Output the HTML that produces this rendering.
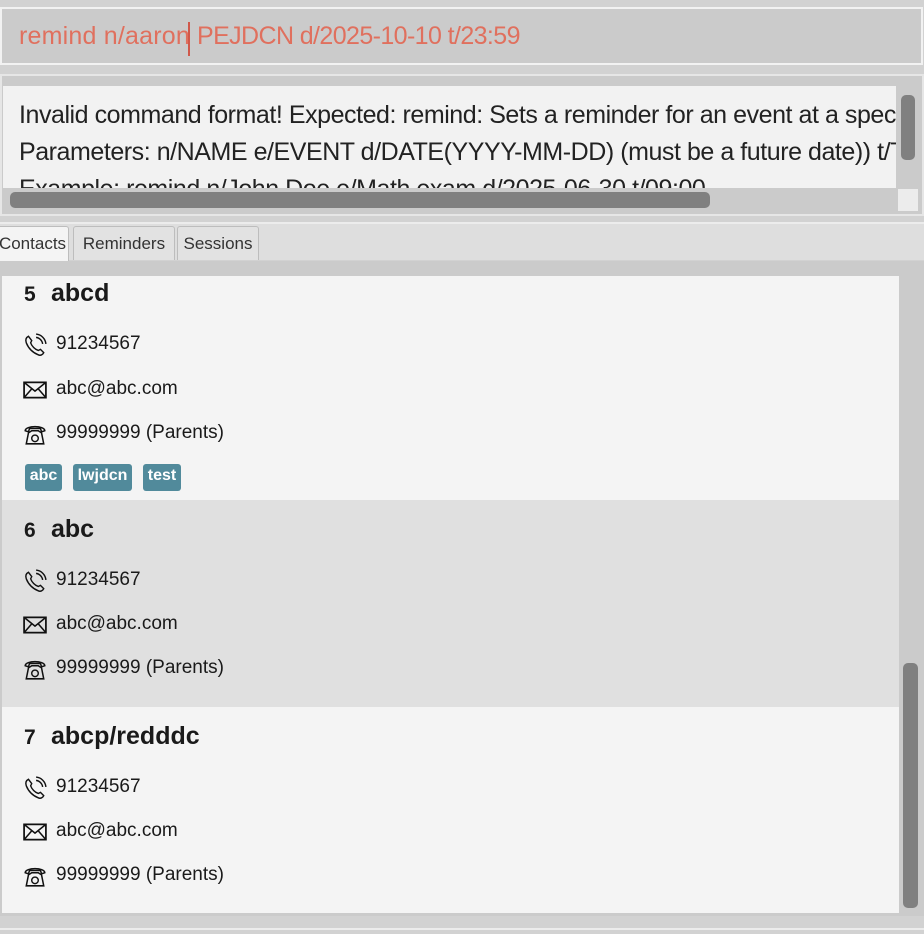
<!DOCTYPE html>
<html><head><meta charset="utf-8"><style>
*{margin:0;padding:0;box-sizing:border-box}
body{width:924px;height:934px;background:#d2d2d2;font-family:"Segoe UI","Liberation Sans",sans-serif;position:relative;overflow:hidden}
.abs{position:absolute}
.cmd{left:0;top:7px;width:923px;height:58px;background:#cbcbcb;border:2px solid #f2f2f2}
.cmd span{position:absolute;top:13px;font-size:25px;color:#e0705e;white-space:nowrap}
.caret{position:absolute;left:188px;top:22px;width:2px;height:34px;background:#d0584a}
.res{left:0;top:74px;width:924px;height:142px;background:#cbcbcb;border:2px solid #e6e6e6}
.resin{left:3px;top:86px;width:893px;height:102px;background:#f2f2f2;overflow:hidden}
.resin div{position:absolute;left:16px;font-size:25px;color:#222;white-space:nowrap;letter-spacing:-0.45px}
.hbar{left:10px;top:192px;width:700px;height:16px;background:#808080;border-radius:5px}
.vbar{left:901px;top:95px;width:14px;height:65px;background:#808080;border-radius:5px}
.corner{left:898px;top:189px;width:20px;height:22px;background:#ececec}
.tabbar{left:0;top:222px;width:924px;height:38px;background:#dedede;border-top:2px solid #ececec}
.tab{position:absolute;top:226px;height:34px;border:1px solid #bdbdbd;border-bottom:none;background:#e2e2e2;font-size:17px;color:#333;padding-top:7px;text-align:center;border-radius:3px 3px 0 0}
.list{left:0;top:261px;width:924px;height:655px;background:#cbcbcb}
.card{position:absolute;left:2px;width:897px}
.t{position:absolute;left:24px;font-size:25px;font-weight:bold;color:#1a1a1a}
.t b{display:inline-block;width:27px;font-size:21px}
.r{position:absolute;left:22px;font-size:19px;color:#1a1a1a;white-space:nowrap}
.r svg{position:absolute;left:1px;top:0px}
.r span{margin-left:34px}
.tag{position:absolute;top:464px;height:27px;background:#518a9b;color:#fff;font-weight:bold;font-size:16px;padding:3px 0 0;text-align:center;border-radius:3px}
.sbar{left:903px;top:663px;width:15px;height:245px;background:#808080;border-radius:5px}
</style></head><body>
<div class="abs cmd"><span style="left:17px;letter-spacing:0.2px">remind n/aaron</span><span style="left:195px;letter-spacing:-0.6px">PEJDCN d/2025-10-10 t/23:59</span></div>
<div class="abs caret"></div>
<div class="abs res"></div>
<div class="abs resin">
<div style="top:15px">Invalid command format! Expected: remind: Sets a reminder for an event at a specific date and time.</div>
<div style="top:52px">Parameters: n/NAME e/EVENT d/DATE(YYYY-MM-DD) (must be a future date)) t/TIME</div>
<div style="top:89px">Example: remind n/John Doe e/Math exam d/2025-06-30 t/09:00</div>
</div>
<div class="abs corner"></div>
<div class="abs hbar"></div>
<div class="abs vbar"></div>
<div class="abs tabbar"></div>
<div class="tab" style="left:-4px;width:73px;background:#f4f4f4;height:36px">Contacts</div>
<div class="tab" style="left:73px;width:102px">Reminders</div>
<div class="tab" style="left:177px;width:82px">Sessions</div>
<div class="abs list"></div>

<svg width="0" height="0" style="position:absolute"><defs>
<g id="ph"><path d="M5 3 C3 4 2 6 3 9 C5 14 9 18 14 20 C16 21 18 20 19 18 L16 15 L14 16 C11 15 8 12 7 9 L8 7 Z" fill="none" stroke="#111" stroke-width="1.3"/><path d="M12 4 A7 7 0 0 1 18 10 M12 1 A10 10 0 0 1 21 10" fill="none" stroke="#111" stroke-width="1.3"/></g>
<g id="em"><rect x="1" y="4" width="20" height="14" fill="none" stroke="#111" stroke-width="1.6"/><path d="M1 4 L11 12 L21 4 M1 18 L8 10 M21 18 L14 10" fill="none" stroke="#111" stroke-width="1.4"/></g>
<g id="tl"><path d="M2 8 C2 3 20 3 20 8 L17 9 L16 6 L6 6 L5 9 Z" fill="none" stroke="#111" stroke-width="1.4"/><path d="M5 10 L8 8 L14 8 L17 10 L19 20 L3 20 Z" fill="none" stroke="#111" stroke-width="1.4"/><circle cx="11" cy="15" r="3" fill="none" stroke="#111" stroke-width="1.3"/></g>
</defs></svg>

<div class="card" style="top:276px;height:224px;background:#f4f4f4"></div>
<div class="card" style="top:500px;height:207px;background:#e0e0e0"></div>
<div class="card" style="top:707px;height:206px;background:#f4f4f4"></div>

<div class="t" style="top:279px"><b>5</b>abcd</div>
<div class="r" style="top:333px"><svg width="24" height="24" viewBox="0 0 22 22"><use href="#ph"/></svg><span>91234567</span></div>
<div class="r" style="top:378px"><svg width="24" height="24" viewBox="0 0 22 22"><use href="#em"/></svg><span>abc@abc.com</span></div>
<div class="r" style="top:422px"><svg width="24" height="24" viewBox="0 0 22 22"><use href="#tl"/></svg><span>99999999 (Parents)</span></div>
<div class="tag" style="left:25px;width:37px">abc</div>
<div class="tag" style="left:73px;width:59px">lwjdcn</div>
<div class="tag" style="left:143px;width:38px">test</div>

<div class="t" style="top:515px"><b>6</b>abc</div>
<div class="r" style="top:569px"><svg width="24" height="24" viewBox="0 0 22 22"><use href="#ph"/></svg><span>91234567</span></div>
<div class="r" style="top:613px"><svg width="24" height="24" viewBox="0 0 22 22"><use href="#em"/></svg><span>abc@abc.com</span></div>
<div class="r" style="top:657px"><svg width="24" height="24" viewBox="0 0 22 22"><use href="#tl"/></svg><span>99999999 (Parents)</span></div>

<div class="t" style="top:722px"><b>7</b>abcp/redddc</div>
<div class="r" style="top:776px"><svg width="24" height="24" viewBox="0 0 22 22"><use href="#ph"/></svg><span>91234567</span></div>
<div class="r" style="top:820px"><svg width="24" height="24" viewBox="0 0 22 22"><use href="#em"/></svg><span>abc@abc.com</span></div>
<div class="r" style="top:864px"><svg width="24" height="24" viewBox="0 0 22 22"><use href="#tl"/></svg><span>99999999 (Parents)</span></div>

<div class="abs sbar"></div>
<div class="abs" style="left:0;top:928px;width:924px;height:2px;background:#ececec"></div>
</body></html>
